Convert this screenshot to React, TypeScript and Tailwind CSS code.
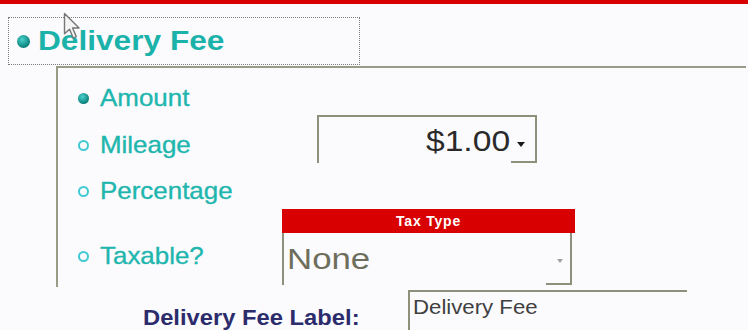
// Delivery fee settings panel (legacy form look)

const FONT = { fontFamily: '"Liberation Sans", Arial, sans-serif' };

function FilledDot({ size = "h-[11px] w-[11px]" }: { size?: string }) {
  return (
    <span
      className={`${size} shrink-0 rounded-full bg-[radial-gradient(circle_at_40%_35%,#49d2cc,#0a7f7a_70%)]`}
    />
  );
}

function EmptyDot() {
  return (
    <span className="h-[11px] w-[11px] shrink-0 rounded-full border-2 border-[#3fcad2]" />
  );
}

function RadioItem({ label, checked }: { label: string; checked?: boolean }) {
  return (
    <div className="flex h-[24px] items-center gap-[11px]">
      {checked ? <FilledDot /> : <EmptyDot />}
      <span className="inline-block origin-left scale-x-[1.08] text-[24px] leading-[24px] text-[#1fb6ae] [-webkit-text-stroke:0.35px_#1fb6ae]">
        {label}
      </span>
    </div>
  );
}

function Cursor() {
  return (
    <svg
      className="absolute left-[63px] top-[12px]"
      width="17"
      height="28"
      viewBox="0 0 12 20"
    >
      <path
        d="M1 1 L1 15.5 L4.6 12.3 L7.2 18.5 L9.4 17.6 L6.8 11.4 L11.4 11.4 Z"
        fill="#f4f4f4"
        stroke="#777777"
        strokeWidth="1"
        strokeLinejoin="round"
      />
    </svg>
  );
}

export default function App() {
  return (
    <div
      className="relative h-[330px] w-[748px] overflow-hidden bg-[#fbfbfe]"
      style={FONT}
    >
      <div className="h-[4px] bg-[#d80000]" />

      {/* Section heading with focus outline */}
      <div className="ml-[8px] mt-[13px] flex h-[48px] w-[352px] items-center border border-dotted border-[#7c7c7c] pl-[8px]">
        <FilledDot size="h-[13px] w-[13px]" />
        <span className="ml-[8px] inline-block origin-left scale-x-[1.13] text-[28px] font-bold leading-[28px] text-[#1bb2aa]">
          Delivery Fee
        </span>
      </div>

      {/* Fieldset */}
      <div className="ml-[56px] mr-[2px] mt-[1px] h-[221px] border-l-2 border-t-2 border-[#9a9b87] pl-[20px]">
        <div className="mt-[18px]">
          <RadioItem label="Amount" checked />
        </div>

        <div className="flex items-start">
          <div className="mt-[23px] w-[239px]">
            <RadioItem label="Mileage" />
          </div>
          <div className="mt-[5px] flex h-[48px] w-[220px] flex-col border-x-2 border-t-2 border-[#8f907c]">
            <div className="flex flex-1 items-start justify-end pr-[10px] pt-[9px]">
              <span className="inline-block origin-right scale-x-[1.12] text-[30px] leading-[30px] text-[#2a2a2a]">
                $1.00
              </span>
              <svg className="ml-[7px] mt-[16px]" width="8" height="5" viewBox="0 0 8 5">
                <path d="M0 0 L8 0 L4 5 Z" fill="#1a1a1a" />
              </svg>
            </div>
            <div className="flex justify-end">
              <div className="h-[2px] w-[24px] bg-[#8f907c]" />
            </div>
          </div>
        </div>

        <div className="mt-[16px]">
          <RadioItem label="Percentage" />
        </div>

        <div className="mt-[6px] flex items-start">
          <div className="mt-[35px] w-[204px]">
            <RadioItem label="Taxable?" />
          </div>
          <div className="flex w-[293px] flex-col">
            <div className="flex h-[24px] items-center justify-center bg-[#d80000] text-[14px] font-bold tracking-[0.8px] text-white">
              Tax Type
            </div>
            <div className="flex h-[52px] w-[290px] flex-col border-x-2 border-[#8f907c]">
              <div className="flex flex-1 items-start justify-between pl-[3px] pr-[7px] pt-[10px]">
                <span className="inline-block origin-left scale-x-[1.2] text-[29px] leading-[32px] text-[#6e6e5c]">
                  None
                </span>
                <svg className="mt-[16px]" width="6" height="4" viewBox="0 0 6 4">
                  <path d="M0 0 L6 0 L3 4 Z" fill="#a0a0a0" />
                </svg>
              </div>
              <div className="flex justify-end">
                <div className="h-[2px] w-[24px] bg-[#8f907c]" />
              </div>
            </div>
          </div>
        </div>
      </div>

      {/* Label row */}
      <div className="mt-[3px] flex items-start">
        <div className="ml-[143px] mt-[16px] w-[265px]">
          <span className="inline-block origin-left scale-x-[1.08] text-[22px] font-bold leading-[24px] text-[#2c2c6c]">
            Delivery Fee Label:
          </span>
        </div>
        <div className="h-[40px] w-[279px] border-l-2 border-t-2 border-[#8f907c] pl-[3px] pt-[3px]">
          <span className="inline-block origin-left scale-x-[1.11] text-[20px] leading-[24px] text-[#404040]">
            Delivery Fee
          </span>
        </div>
      </div>

      <Cursor />
    </div>
  );
}
